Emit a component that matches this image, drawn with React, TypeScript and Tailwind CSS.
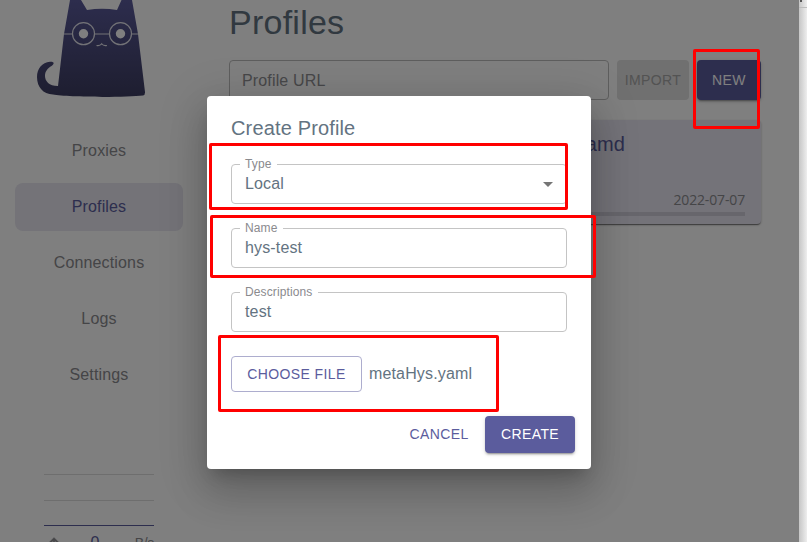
import React from "react";

const navItems = ["Proxies", "Profiles", "Connections", "Logs", "Settings"];

function CatLogo() {
  return (
    <svg className="ml-[37px] block h-[98px] w-[110px] shrink-0" viewBox="37 0 110 98">
      <defs>
        <linearGradient id="fur" x1="0" y1="0" x2="0" y2="1">
          <stop offset="0" stopColor="#5e5ea2" />
          <stop offset="1" stopColor="#3c3c60" />
        </linearGradient>
      </defs>
      <path
        d="M67 -12 L70 0 L64 34 L58 86 C49 86 45 81 45 76 C45 71 48 68 51.500 66 C55 63.500 54 61.500 50 61.800 C42 62.500 37 69 37 77 C37 87 43 94 53 94.600 C67 97.500 127 97.500 143 95.500 Q145.200 95 145 92 L138 34 L132 0 L130 -12 L121.500 0 L117 10 Q102 7.500 87 10 L81 0 Z"
        fill="url(#fur)"
      />
      <g fill="none" stroke="#fff" strokeOpacity="0.85" strokeWidth="1.200">
        <path d="M64 34h8M95 34h14M132 34h6" />
        <circle cx="83.500" cy="33.700" r="11" />
        <circle cx="120.500" cy="33.700" r="11" />
        <path d="M96.500 45.500c2 .4 4 0 5.200-1.700c1.200 1.700 3.200 2.100 5.200 1.700" strokeWidth="1.100" />
      </g>
      <circle cx="83.500" cy="33.700" r="4.700" fill="#fff" />
      <circle cx="120.500" cy="33.700" r="4.700" fill="#fff" />
    </svg>
  );
}

function Sidebar() {
  return (
    <aside className="flex w-[199px] shrink-0 flex-col">
      <CatLogo />
      <nav className="mt-[29px] flex flex-col gap-2 pr-4 pl-[15px]">
        {navItems.map((item) => (
          <div
            key={item}
            className={
              item === "Profiles"
                ? "flex h-12 items-center justify-center rounded-lg bg-[#e8e6f0] text-[#5b5c9d]"
                : "flex h-12 items-center justify-center text-[#8a8a8e]"
            }
          >
            {item}
          </div>
        ))}
      </nav>
      <div className="mt-[75px] ml-11 flex w-[110px] flex-col">
        <div className="h-px bg-[#dcdcdc]" />
        <div className="mt-[25px] h-px bg-[#dcdcdc]" />
        <div className="mt-6 h-px bg-[#5b5c9d]" />
        <div className="mt-[7px] flex h-5 items-center">
          <svg className="ml-[2px] size-4 shrink-0" viewBox="0 0 24 24">
            <path d="m4 12 1.410 1.410L11 7.830V20h2V7.830l5.580 5.590L20 12l-8-8z" fill="#8a8a8e" stroke="#8a8a8e" strokeWidth="1" />
          </svg>
          <span className="w-[66px] text-center text-[#5b5c9d]">0</span>
          <span className="ml-auto text-sm leading-5 tracking-[-0.3px] text-[#8a8a8e]">B/s</span>
        </div>
      </div>
    </aside>
  );
}

function ProfilesPage() {
  return (
    <main className="flex flex-1 flex-col pr-[38px] pl-[30px]">
      <h1 className="mt-[2px] h-10 text-[34px] leading-10 tracking-[0.25px] text-[#637381]">Profiles</h1>
      <div className="mt-[18px] flex h-10 gap-2">
        <div className="flex flex-1 items-center rounded border border-[#bdbdbd] pt-[2px] pl-3 text-[#8f8f92]">Profile URL</div>
        <button className="w-[72px] rounded bg-[#e0e0e0] text-sm tracking-[0.4px] text-[#a6a6a6]">IMPORT</button>
        <button className="w-16 rounded bg-[#5b5c9d] text-sm tracking-[0.4px] text-white shadow-[0_3px_1px_-2px_rgba(0,0,0,.2),0_2px_2px_rgba(0,0,0,.14),0_1px_5px_rgba(0,0,0,.12)]">NEW</button>
      </div>
      <section className="mt-5 flex h-[104px] w-[260px] flex-col self-end rounded bg-[#e8e6f2] px-4 shadow-[0_2px_1px_-1px_rgba(0,0,0,.3),0_1px_1px_rgba(0,0,0,.2),0_1px_3px_rgba(0,0,0,.2)]">
        <h2 className="mt-2 w-[108px] text-right text-xl leading-8 tracking-[0.15px] whitespace-nowrap text-[#5b5c9d]">amd</h2>
        <div className="mt-[30px] text-right font-['Open_Sans',sans-serif] text-sm leading-5 tracking-[-0.15px] text-[#8a8a8e]">2022-07-07</div>
        <div className="mt-[2px] h-1 shrink-0 bg-[#ceccd8]" />
      </section>
    </main>
  );
}

function Field({ label, value, select = false }: { label: string; value: string; select?: boolean }) {
  return (
    <fieldset className="flex h-[46px] min-w-0 flex-col rounded border border-[#c4c4c4] pl-[8px]">
      <legend className="h-3 pr-[6px] pl-[5px] text-xs leading-3 tracking-[0.11px] text-[#8a8a8e]">{label}</legend>
      <div className="flex h-[27px] items-center justify-between pr-[13px] pl-[5px] text-[#637381]">
        <span>{value}</span>
        {select && (
          <svg className="mt-[2px] h-[5px] w-[10px]" viewBox="0 0 10 5">
            <path d="M0 0h10L5 5z" fill="#757575" />
          </svg>
        )}
      </div>
    </fieldset>
  );
}

function CreateDialog() {
  return (
    <div className="flex h-[373px] w-96 flex-col rounded bg-white shadow-[0_11px_15px_-7px_rgba(0,0,0,.2),0_24px_38px_3px_rgba(0,0,0,.14),0_9px_46px_8px_rgba(0,0,0,.12)]">
      <h2 className="mt-4 px-6 text-xl leading-8 tracking-[0.15px] text-[#637381]">Create Profile</h2>
      <div className="mt-[14px] flex flex-col gap-[18px] px-6">
        <Field label="Type" value="Local" select />
        <Field label="Name" value="hys-test" />
        <Field label="Descriptions" value="test" />
      </div>
      <div className="mt-6 flex items-center gap-[7px] px-6 text-[#637381]">
        <button className="h-9 w-[131px] rounded border border-[#adadce] text-sm tracking-[0.4px] text-[#5b5c9d]">CHOOSE FILE</button>
        <span>metaHys.yaml</span>
      </div>
      <div className="mt-6 flex justify-end gap-2 pr-4 text-sm tracking-[0.4px]">
        <button className="h-[37px] w-[76px] pb-[2px] text-[#5b5c9d]">CANCEL</button>
        <button className="h-[37px] w-[90px] rounded bg-[#5b5c9d] pb-[2px] text-white shadow-[0_3px_1px_-2px_rgba(0,0,0,.2),0_2px_2px_rgba(0,0,0,.14),0_1px_5px_rgba(0,0,0,.12)]">CREATE</button>
      </div>
    </div>
  );
}

export default function App() {
  return (
    <div className="relative flex h-[542px] w-[807px] overflow-hidden bg-white font-['Liberation_Sans',Arial,sans-serif] text-base tracking-[0.15px]">
      <div className="flex w-[799px] shrink-0">
        <Sidebar />
        <ProfilesPage />
      </div>
      <div className="flex-1 bg-linear-to-r from-[#c6c6c6] to-[#eeeeee]">
        <div className="ml-px h-[2px] w-[2px] bg-[#555]" />
        <div className="mt-[5px] h-px bg-[#bcbcbc]" />
      </div>
      <div className="absolute top-0 left-0 flex h-[542px] w-[799px] items-start justify-center overflow-hidden bg-black/50 pt-24 pr-px">
        <CreateDialog />
      </div>
      <div className="absolute top-[143px] left-[209px] h-[67px] w-[359px] rounded-[2px] border-3 border-[#ff0000]" />
      <div className="absolute top-[215px] left-[210px] h-[63px] w-[386px] rounded-[2px] border-3 border-[#ff0000]" />
      <div className="absolute top-[335px] left-[218px] h-[77px] w-[281px] rounded-[2px] border-3 border-[#ff0000]" />
      <div className="absolute top-[49px] left-[693px] h-20 w-[67px] rounded-[2px] border-3 border-[#ff0000]" />
    </div>
  );
}
